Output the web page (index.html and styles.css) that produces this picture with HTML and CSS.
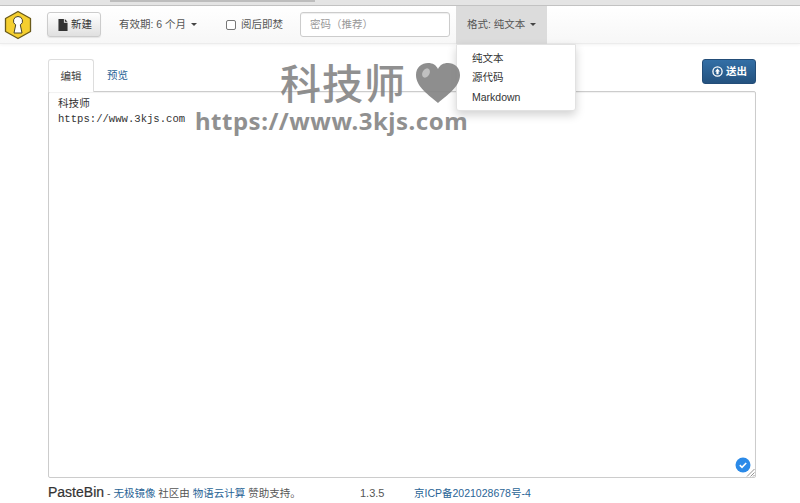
FILE: index.html
```html
<!DOCTYPE html>
<html lang="zh">
<head>
<meta charset="utf-8">
<title>PasteBin</title>
<link rel="stylesheet" href="styles.css">
</head>
<body>
<div class="chrome"><div class="chrome-tab"></div></div>
<nav class="navbar">
  <svg class="logo" width="28" height="30" viewBox="0 0 28 30">
    <path d="M14 1.5 26.5 8.5V21.5L14 28.5 1.5 21.5V8.5Z" fill="#f5cf2f" stroke="#6a5a1a" stroke-width="1.300" stroke-linejoin="round"/>
    <path d="M14 6.500a4.500 4.500 0 0 1 2.300 8.400L18 23H10l1.700-8.100A4.500 4.500 0 0 1 14 6.500Z" fill="#fff" stroke="#4a4428" stroke-width="1"/>
  </svg>
  <button class="btn-new">
    <svg width="10" height="12" viewBox="0 0 11 13"><path d="M0.500 0H6.500V4H10.500V13H0.500ZM7.500 0 10.500 3H7.500Z" fill="#333"/></svg>
    新建
  </button>
  <span class="nav-item expiry">有效期: 6 个月 <i class="caret"></i></span>
  <label class="burn"><span class="check"></span>阅后即焚</label>
  <div class="password">密码（推荐）</div>
  <div class="format">格式: 纯文本 <i class="caret"></i>
    <ul class="menu">
      <li>纯文本</li>
      <li>源代码</li>
      <li>Markdown</li>
    </ul>
  </div>
</nav>
<main class="main">
  <div class="tabs">
    <span class="tab active">编辑</span>
    <span class="tab link">预览</span>
    <button class="send">
      <svg width="11" height="11" viewBox="0 0 11 11"><circle cx="5.500" cy="5.500" r="4.600" fill="none" stroke="#fff" stroke-width="1.300"/><path d="M5.500 2.500 8 5.500H6.600V8.300H4.400V5.500H3Z" fill="#fff"/></svg>
      送出
    </button>
  </div>
  <div class="editor">
    <div class="code"><div>科技师</div><div>https://www.3kjs.com</div></div>
    <svg class="badge" width="16" height="16" viewBox="0 0 16 16"><circle cx="8" cy="8" r="7.500" fill="#2b8ae8"/><path d="M4.800 8.200 7 10.300 11.200 6" fill="none" stroke="#fff" stroke-width="1.600"/></svg>
    <svg class="grip" width="9" height="9" viewBox="0 0 9 9"><path d="M8.500 1 1 8.500M8.500 4.500 4.500 8.500M8.500 7 7 8.500" stroke="#777" stroke-width="0.800"/></svg>
  </div>
  <footer class="footer">
    <div class="foot-left"><span class="brand">PasteBin</span> - <a>无极镜像</a> 社区由 <a>物语云计算</a> 赞助支持。</div>
    <div class="version">1.3.5</div>
    <a class="icp">京ICP备2021028678号-4</a>
  </footer>
</main>
<div class="watermark">
  <div class="wm-title">科技师<svg class="heart" width="46" height="42" viewBox="0 0 46 42"><path d="M23 41C14 33 1 25 1 13 1 5 7 1 13 1c5 0 8 2 10 6 2-4 5-6 10-6 6 0 12 4 12 12 0 12-13 20-22 28Z" fill="#858585"/><ellipse cx="11" cy="11" rx="3.500" ry="5" fill="#bbb" transform="rotate(30 11 11)"/></svg></div>
  <div class="wm-url">https://www.3kjs.com</div>
</div>
</body>
</html>
```
FILE: styles.css
```css
* { box-sizing: border-box; }
html, body { margin: 0; padding: 0; }
body {
  width: 800px;
  height: 503px;
  overflow: hidden;
  position: relative;
  background: #fff;
  color: #333;
  font: 10.500px/17px "Liberation Sans", "Noto Sans CJK SC", sans-serif;
}
.chrome { height: 6px; background: #e4e4e4; border-bottom: 1px solid #c4c4c4; }
.chrome-tab { width: 205px; height: 2px; margin-left: 110px; background: #bdbdbd; }
.navbar {
  height: 38px;
  display: flex;
  align-items: center;
  background: linear-gradient(#fff, #f7f7f7);
  border-bottom: 1px solid #ececec;
  box-shadow: 0 1px 3px rgba(0,0,0,.05);
}
.logo { margin-left: 4px; flex: none; }
.btn-new {
  display: flex;
  align-items: center;
  gap: 3px;
  margin-left: 15px;
  width: 54px;
  height: 25px;
  padding: 0 0 0 10px;
  border: 1px solid #ccc;
  border-radius: 3px;
  background: linear-gradient(#fff, #e0e0e0);
  color: #333;
  font: inherit;
  box-shadow: 0 1px 1px rgba(0,0,0,.08);
}
.nav-item { color: #555; }
.expiry { margin-left: 18px; width: 79px; white-space: nowrap; }
.caret {
  display: inline-block;
  width: 0; height: 0;
  margin-left: 2px;
  vertical-align: 2px;
  border-top: 3px solid #444;
  border-left: 3px solid transparent;
  border-right: 3px solid transparent;
}
.burn { display: flex; align-items: center; margin-left: 28px; width: 62px; color: #555; }
.check {
  width: 10px; height: 10px; margin-right: 5px;
  border: 1px solid #777; border-radius: 2px; background: #fff;
}
.password {
  margin-left: 12px;
  width: 150px;
  height: 25px;
  padding: 3px 9px;
  border: 1px solid #ccc;
  border-radius: 3px;
  background: #fff;
  color: #999;
  box-shadow: inset 0 1px 1px rgba(0,0,0,.07);
}
.format {
  position: relative;
  margin-left: 6px;
  width: 91px;
  height: 38px;
  padding: 10px 0 0 11px;
  background: #dcdcdc;
  color: #555;
  white-space: nowrap;
}
.menu {
  position: absolute;
  top: 38px;
  left: 0;
  width: 120px;
  height: 67px;
  margin: 0;
  padding: 4px 0;
  list-style: none;
  background: #fff;
  border: 1px solid #e2e2e2;
  border-radius: 0 0 3px 3px;
  box-shadow: 0 4px 10px rgba(0,0,0,.18);
  color: #333;
  z-index: 3;
}
.menu li { height: 19.500px; padding-left: 15px; line-height: 19.500px; }
.main { padding: 15px 44px 0 48px; }
.tabs { display: flex; height: 32px; align-items: flex-start; }
.tab { height: 33px; width: 46px; text-align: center; line-height: 33px; }
.tab.active {
  position: relative;
  z-index: 1;
  background: #fff;
  border: 1px solid #ddd;
  border-bottom: 0;
  border-radius: 3px 3px 0 0;
  color: #444;
}
.tab.link { color: #2a6496; width: 47px; }
.send {
  display: flex;
  align-items: center;
  gap: 3px;
  margin-left: auto;
  width: 54px;
  height: 25px;
  padding: 0 0 0 9px;
  border: 1px solid #234d78;
  border-radius: 3px;
  background: linear-gradient(#336fa6, #24527f);
  color: #fff;
  font: inherit;
  font-weight: 700;
}
.editor {
  position: relative;
  height: 387px;
  padding: 5px 9px;
  border: 1px solid #ccc;
  border-radius: 2px;
  box-shadow: inset 0 1px 1px rgba(0,0,0,.06);
}
.code { font: 10.600px/15px "Liberation Mono", "Noto Sans CJK SC", monospace; color: #333; }
.badge { position: absolute; right: 4px; bottom: 4px; }
.grip { position: absolute; right: 0; bottom: 0; }
.footer { display: flex; align-items: center; height: 30px; color: #555; white-space: nowrap; }
.foot-left { width: 312px; }
.brand { color: #333; font-size: 14px; -webkit-text-stroke: .2px #333; }
.footer a { color: #2a6496; }
.version { width: 54px; font-size: 11px; }
.watermark {
  position: absolute;
  z-index: 4;
  left: 195px;
  top: 56px;
  width: 290px;
  color: #878787;
  font-family: "Noto Sans CJK SC", "Noto Sans", sans-serif;
  pointer-events: none;
  opacity: .92;
}
.wm-title {
  display: flex;
  align-items: center;
  margin-left: 85px;
  font-size: 41px;
  font-weight: 500;
  line-height: 50px;
  letter-spacing: 1px;
}
.heart { margin-left: 9px; margin-top: 4px; }
.wm-url {
  margin-top: 1px;
  font: 700 24px/28px "Noto Sans", sans-serif;
  letter-spacing: .5px;
  white-space: nowrap;
}
```
